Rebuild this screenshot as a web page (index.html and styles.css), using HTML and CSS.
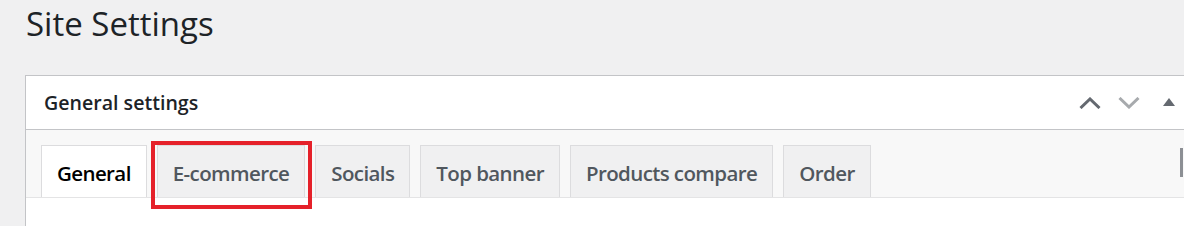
FILE: index.html
```html
<!DOCTYPE html>
<html>
<head>
<meta charset="utf-8">
<link rel="stylesheet" href="styles.css">
</head>
<body>
<div class="wrap">
  <h1 class="title">Site Settings</h1>
  <div class="postbox">
    <div class="postbox-header">
      <h2 class="hndle">General settings</h2>
      <div class="actions">
        <span class="btn up"><svg width="22" height="12" viewBox="0 0 22 12"><path d="M1.5 11 L11 2 L20.5 11" fill="none" stroke="#646970" stroke-width="3"/></svg></span>
        <span class="btn down"><svg width="22" height="12" viewBox="0 0 22 12"><path d="M1.5 1 L11 10 L20.5 1" fill="none" stroke="#a7aaad" stroke-width="3"/></svg></span>
        <span class="btn toggle"><svg width="12" height="8" viewBox="0 0 12 8"><path d="M6 0 L12 8 L0 8 Z" fill="#646970"/></svg></span>
      </div>
    </div>
    <div class="tabbar">
      <nav class="tabs">
        <a class="tab active">General</a>
        <a class="tab hl">E-commerce</a>
        <a class="tab">Socials</a>
        <a class="tab">Top banner</a>
        <a class="tab">Products compare</a>
        <a class="tab">Order</a>
      </nav>
      <div class="scroll"></div>
    </div>
    <div class="content"></div>
  </div>
</div>
</body>
</html>
```
FILE: styles.css
```css
html, body { margin: 0; padding: 0; }
body {
  background: #f0f0f1;
  font-family: "Open Sans", "Noto Sans", sans-serif;
  color: #1d2327;
  width: 1184px;
  height: 226px;
  overflow: hidden;
}
.wrap { padding-left: 25px; }
.title {
  margin: 0;
  padding: 4px 0 0 1px;
  height: 75px;
  box-sizing: border-box;
  font-size: 33px;
  font-weight: 400;
  line-height: 40px;
  color: #1d2327;
}
.postbox {
  background: #fff;
  border: 1px solid #c3c4c7;
  border-right: none;
  height: 200px;
}
.postbox-header {
  height: 53px;
  border-bottom: 1px solid #c3c4c7;
  display: flex;
  align-items: center;
  justify-content: space-between;
}
.hndle {
  margin: 0;
  padding-left: 18px;
  font-size: 19.6px;
  font-weight: 600;
  color: #1d2327;
}
.actions { display: flex; align-items: center; padding-right: 9px; }
.btn { display: flex; align-items: center; justify-content: center; }
.up { width: 22px; margin-right: 17px; }
.down { width: 22px; margin-right: 23px; }
.toggle { width: 12px; margin-bottom: 2px; }
.tabbar {
  background: #f8f8f8;
  height: 67px;
  border-bottom: 1px solid #e4e4e5;
  display: flex;
  align-items: flex-end;
  justify-content: space-between;
}
.tabs { display: flex; gap: 10px; padding-left: 15px; }
.tab {
  display: block;
  height: 52px;
  box-sizing: border-box;
  padding: 3px 15px 0;
  line-height: 49px;
  border: 1px solid #dcdcde;
  border-bottom: none;
  background: #f0f0f1;
  color: #50575e;
  font-size: 20.5px;
  letter-spacing: -0.6px;
  font-weight: 600;
  position: relative;
}
.tab.active { background: #fff; color: #000; }
.tab.hl::after {
  content: "";
  position: absolute;
  left: -7px; right: -8px; top: -5px; bottom: -12px;
  border: 4px solid #e5212a;
}
.scroll {
  width: 3px;
  height: 29px;
  background: #8c8f94;
  align-self: flex-start;
  margin-top: 18px;
  margin-right: 1px;
}
.content { background: #fff; }
```
